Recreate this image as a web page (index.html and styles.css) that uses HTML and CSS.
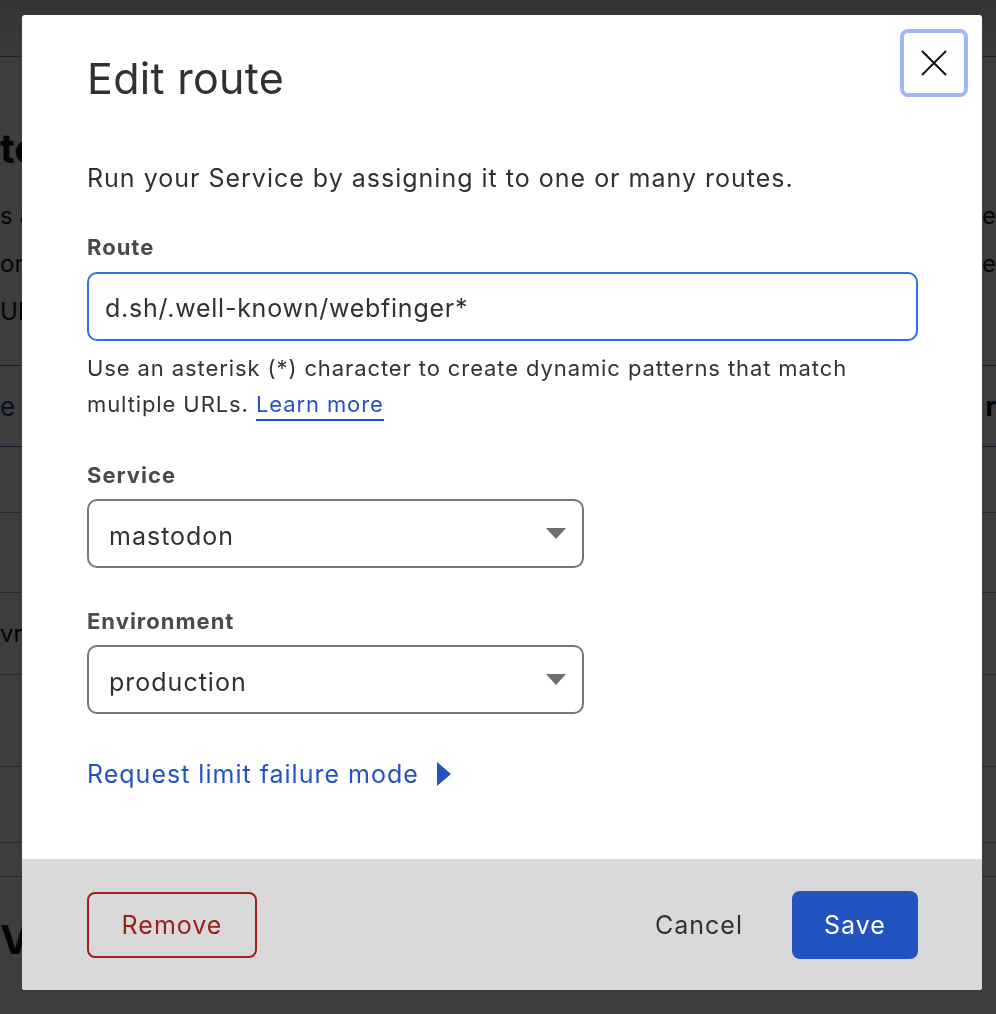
FILE: index.html
```html
<!DOCTYPE html>
<html lang="en">
<head>
<meta charset="utf-8">
<title>Edit route</title>
<link rel="stylesheet" href="styles.css">
</head>
<body>
<div class="page">
  <div class="page-top"></div>
  <div class="page-row page-head"><span class="big">tes</span></div>
  <div class="page-row page-text"><span>s are</span><span class="r">e</span></div>
  <div class="page-row page-text"><span>om the</span><span class="r">ie</span></div>
  <div class="page-row page-text"><span>URL</span></div>
  <div class="page-tabs"><span>e r</span><span class="strong">r</span></div>
  <div class="page-line l1"></div>
  <div class="page-line l2"></div>
  <div class="page-line l3"><span>vr</span></div>
  <div class="page-line l4"></div>
  <div class="page-line l5"></div>
  <div class="page-line l6"></div>
  <div class="page-bottom"><span class="big">V</span></div>
</div>
<div class="overlay"></div>

<div class="modal" role="dialog" aria-labelledby="modal-title">
  <button class="close" type="button" aria-label="Close">
    <svg width="26" height="26" viewBox="0 0 26 26"><path d="M1 1L25 25M25 1L1 25" stroke="#111" stroke-width="2" fill="none"/></svg>
  </button>
  <div class="modal-body">
    <h1 class="title" id="modal-title">Edit route</h1>
    <p class="lead">Run your Service by assigning it to one or many routes.</p>

    <div class="field">
      <label class="label">Route</label>
      <div class="input">d.sh/.well-known/webfinger*</div>
      <p class="help">Use an asterisk (*) character to create dynamic patterns that match multiple URLs. <a class="link" href="#">Learn more</a></p>
    </div>

    <div class="field">
      <label class="label">Service</label>
      <div class="select"><span>mastodon</span><span class="caret"></span></div>
    </div>

    <div class="field">
      <label class="label">Environment</label>
      <div class="select"><span>production</span><span class="caret"></span></div>
    </div>

    <a class="disclosure" href="#">Request limit failure mode <span class="tri"></span></a>
  </div>
  <div class="modal-footer">
    <button class="btn btn-remove" type="button">Remove</button>
    <div class="spacer"></div>
    <button class="btn btn-cancel" type="button">Cancel</button>
    <button class="btn btn-save" type="button">Save</button>
  </div>
</div>
</body>
</html>
```

FILE: styles.css
```css
* { box-sizing: border-box; }
html, body { margin: 0; padding: 0; }
body {
  width: 996px;
  height: 1014px;
  overflow: hidden;
  font-family: Inter, "Noto Sans", "Liberation Sans", sans-serif;
  background: #fff;
  color: #111;
  position: relative;
}

/* Background page (dimmed) */
.page { width: 996px; height: 1014px; display: flex; flex-direction: column; }
.page-top { height: 57px; border-bottom: 1px solid #999; background: linear-gradient(#d8d8d8, #f4f4f4); }
.page-row { display: flex; justify-content: space-between; }
.page-head { height: 134px; align-items: flex-end; padding-bottom: 18px; }
.page-text { height: 48px; align-items: center; font-size: 24px; color: #222; }
.big { font-size: 40px; font-weight: 700; line-height: 48px; }
.page-tabs { margin-top: 30px; height: 82px; border-top: 1px solid #5a78c8; border-bottom: 1px solid #5a78c8; display: flex; justify-content: space-between; align-items: center; font-size: 26px; color: #23408f; }
.strong { font-weight: 700; color: #000; }
.page-line { border-bottom: 1px solid #aaa; display: flex; align-items: center; font-size: 24px; }
.l1 { height: 66px; }
.l2 { height: 80px; }
.l3 { height: 82px; }
.l4 { height: 92px; }
.l5 { height: 76px; }
.l6 { height: 34px; }
.page-bottom { flex: 1; display: flex; align-items: center; padding-bottom: 12px; }
.r { margin-right: 0; }

.overlay {
  position: fixed;
  inset: 0;
  background: rgba(0, 0, 0, 0.76);
}

/* Modal */
.modal {
  position: fixed;
  left: 22px;
  top: 15px;
  width: 960px;
  height: 975px;
  background: #fff;
  border-radius: 3px;
  display: flex;
  flex-direction: column;
  overflow: hidden;
  color: #313131;
}
.close {
  position: absolute;
  top: 14px;
  right: 14px;
  width: 68px;
  height: 68px;
  border: 4px solid #9cb9f3;
  border-radius: 8px;
  background: #fff;
  padding: 0;
  display: flex;
  align-items: center;
  justify-content: center;
}
.modal-body {
  flex: 1;
  padding: 37px 64px 0 65px;
}
.title {
  margin: 0;
  font-size: 43px;
  line-height: 52px;
  font-weight: 400;
  letter-spacing: 0.3px;
  color: #313131;
}
.lead {
  margin: 56px 0 0;
  font-size: 25px;
  line-height: 36px;
  letter-spacing: 1px;
  color: #313131;
}
.field { margin-top: 35px; display: flex; flex-direction: column; }
.field + .field { margin-top: 37px; }
.label {
  font-size: 22px;
  line-height: 28px;
  padding-top: 2px;
  font-weight: 700;
  letter-spacing: 1px;
  color: #4a4a4a;
}
.input {
  margin-top: 11px;
  height: 69px;
  border: 2px solid #2f6fe8;
  border-radius: 10px;
  padding: 2px 16px 0;
  display: flex;
  align-items: center;
  font-size: 25px;
  letter-spacing: 0.75px;
  color: #313131;
}
.help {
  margin: 9px 0 0;
  font-size: 22px;
  line-height: 36px;
  letter-spacing: 0.9px;
  color: #333;
}
.link {
  color: #2353c0;
  text-decoration: none;
  border-bottom: 2px solid #2353c0;
  padding-bottom: 2px;
}
.select {
  margin-top: 10px;
  width: 497px;
  height: 69px;
  border: 2px solid #777;
  border-radius: 10px;
  padding: 4px 16px 0 20px;
  display: flex;
  align-items: center;
  justify-content: space-between;
  font-size: 25px;
  letter-spacing: 1px;
  color: #313131;
}
.caret {
  width: 0;
  height: 0;
  margin-top: -4px;
  border-left: 10px solid transparent;
  border-right: 10px solid transparent;
  border-top: 11px solid #6b6e73;
}
.disclosure {
  display: inline-flex;
  align-items: center;
  gap: 18px;
  margin-top: 43px;
  font-size: 25px;
  line-height: 34px;
  letter-spacing: 1px;
  color: #2353c0;
  text-decoration: none;
}
.tri {
  width: 0;
  height: 0;
  border-top: 12.5px solid transparent;
  border-bottom: 12.5px solid transparent;
  border-left: 14px solid #2353c0;
}

.modal-footer {
  height: 131px;
  background: #d9d9d9;
  display: flex;
  align-items: center;
  padding: 0 64px 0 65px;
}
.spacer { flex: 1; }
.btn {
  font-family: inherit;
  font-size: 25px;
  letter-spacing: 1px;
  border-radius: 8px;
  cursor: pointer;
}
.btn-remove {
  width: 170px;
  height: 66px;
  border: 2px solid #9b2316;
  background: transparent;
  color: #9b2316;
}
.btn-cancel {
  border: none;
  background: transparent;
  color: #313131;
  padding: 0;
  margin-right: 49px;
}
.btn-save {
  width: 126px;
  height: 68px;
  border: none;
  background: #2353c0;
  color: #fff;
}
```
